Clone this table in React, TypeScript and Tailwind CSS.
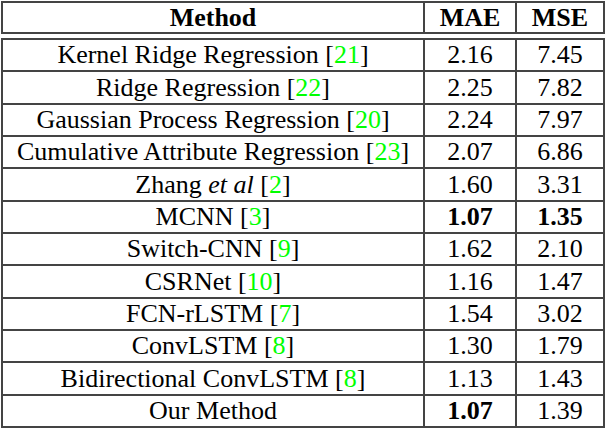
const rows: { name: string; it?: string; cite: string; mae: string; mse: string; bMae?: boolean; bMse?: boolean }[] = [
  { name: "Kernel Ridge Regression", cite: "21", mae: "2.16", mse: "7.45" },
  { name: "Ridge Regression", cite: "22", mae: "2.25", mse: "7.82" },
  { name: "Gaussian Process Regression", cite: "20", mae: "2.24", mse: "7.97" },
  { name: "Cumulative Attribute Regression", cite: "23", mae: "2.07", mse: "6.86" },
  { name: "Zhang", it: "et al", cite: "2", mae: "1.60", mse: "3.31" },
  { name: "MCNN", cite: "3", mae: "1.07", mse: "1.35", bMae: true, bMse: true },
  { name: "Switch-CNN", cite: "9", mae: "1.62", mse: "2.10" },
  { name: "CSRNet", cite: "10", mae: "1.16", mse: "1.47" },
  { name: "FCN-rLSTM", cite: "7", mae: "1.54", mse: "3.02" },
  { name: "ConvLSTM", cite: "8", mae: "1.30", mse: "1.79" },
  { name: "Bidirectional ConvLSTM", cite: "8", mae: "1.13", mse: "1.43" },
  { name: "Our Method", cite: "", mae: "1.07", mse: "1.39", bMae: true },
]

export default function App() {
  return (
    <div className="w-[606px] h-[428px] bg-white pl-[1px] pt-[1px] text-[26px] text-black font-['Liberation_Serif',serif]">
      <div className="w-[604px] h-[33px] border-2 border-[#444] flex items-center font-bold leading-none">
        <div className="w-[422px] h-full flex items-center justify-center border-r-2 border-[#444]">Method</div>
        <div className="w-[92px] h-full flex items-center justify-center border-r-2 border-[#444]">MAE</div>
        <div className="flex-1 h-full flex items-center justify-center">MSE</div>
      </div>
      <div className="mt-[4px] w-[604px] border-x-2 border-b-2 border-[#444]">
        {rows.map((r, i) => (
          <div key={i} className="h-[32.35px] flex border-t-2 border-[#444] leading-none">
            <div className="w-[422px] flex items-center justify-center border-r-2 border-[#444] whitespace-nowrap">
              {r.name}
              {r.it && <>&nbsp;<i>{r.it}</i></>}
              {r.cite && <>&nbsp;[<span className="text-[#00ff00]">{r.cite}</span>]</>}
            </div>
            <div className={`w-[92px] flex items-center justify-center border-r-2 border-[#444] ${r.bMae ? "font-bold" : ""}`}>{r.mae}</div>
            <div className={`flex-1 flex items-center justify-center ${r.bMse ? "font-bold" : ""}`}>{r.mse}</div>
          </div>
        ))}
      </div>
    </div>
  )
}
